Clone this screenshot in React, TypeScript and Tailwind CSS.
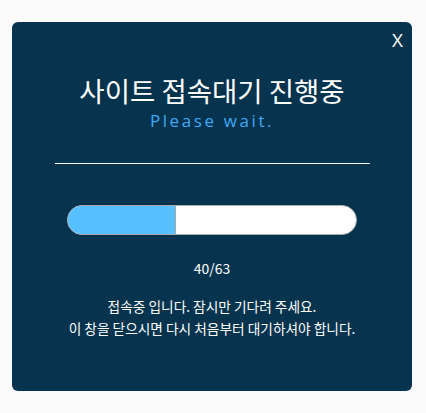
import React from "react";

export default function App() {
  const cur = 40;
  const total = 63;
  return (
    <div className="w-[426px] h-[413px] bg-[#fafafa] pt-[22px] pl-[12px]" style={{ fontFamily: '"Noto Sans CJK KR", "Noto Sans", sans-serif' }}>
      <div className="relative w-[400px] h-[369px] rounded-[6px] bg-[#06344e] flex flex-col items-center text-white">
        <div className="absolute right-[9px] top-[6px] text-[19px] leading-[24px]" style={{ fontFamily: '"Open Sans", sans-serif' }}>X</div>
        <div className="mt-[50px] text-[27.5px] leading-[36px]">사이트 접속대기 진행중</div>
        <div className="mt-[2px] text-[17px] leading-[22px] tracking-[2.6px] text-[#3fa9f5]" style={{ fontFamily: '"Open Sans", sans-serif' }}>Please wait.</div>
        <div className="mt-[31px] w-[315px] h-px bg-white" style={{ marginLeft: 1 }}></div>
        <div className="mt-[41px] w-[290px] h-[30px] rounded-full border border-[#aaaaaa] bg-white overflow-hidden flex">
          <div className="h-full bg-[#55bfff] border-r border-[#aaaaaa]" style={{ width: 108 }}></div>
        </div>
        <div className="mt-[23px] text-[14px] leading-[20px]">{cur}/{total}</div>
        <div className="mt-[17px] text-[13.7px] leading-[22px] text-center">
          접속중 입니다. 잠시만 기다려 주세요.<br />
          이 창을 닫으시면 다시 처음부터 대기하셔야 합니다.
        </div>
      </div>
    </div>
  );
}
